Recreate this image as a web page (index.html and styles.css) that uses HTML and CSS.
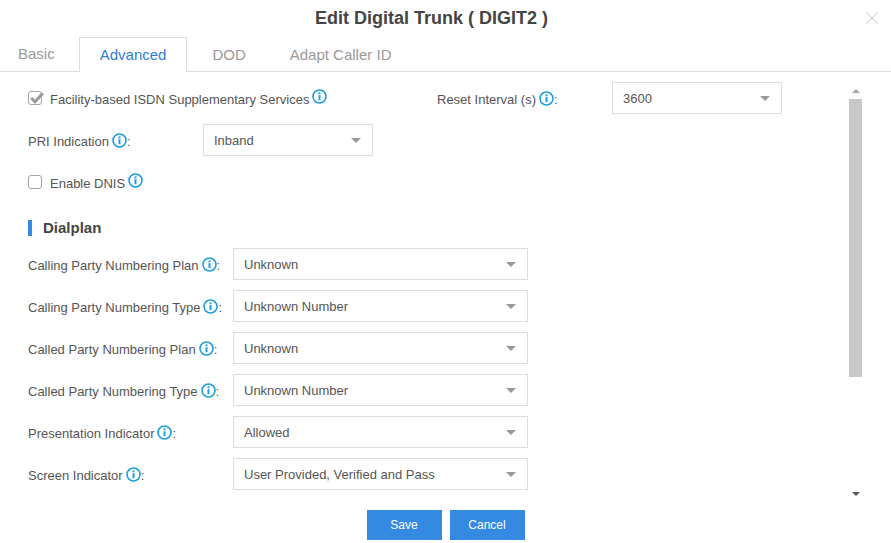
FILE: index.html
```html
<!DOCTYPE html>
<html lang="en">

<head>
  <meta charset="UTF-8">
  <title>Edit Digital Trunk</title>
  <link rel="stylesheet" href="styles.css">
</head>

<body>
  <svg class="sprite" width="0" height="0">
    <symbol id="info" viewBox="0 0 15 15">
      <circle cx="7.5" cy="7.5" r="6.5" fill="none" stroke="#1c9fe0" stroke-width="1.6" />
      <rect x="6.5" y="6.2" width="2" height="5" fill="#1c9fe0" />
      <rect x="6.5" y="3.4" width="2" height="1.9" fill="#1c9fe0" />
    </symbol>
  </svg>

  <div class="modal">
    <div class="modal-title">
      <h1>Edit Digital Trunk ( DIGIT2 )</h1>
      <svg class="close-icon" width="12" height="12" viewBox="0 0 12 12">
        <path d="M0.5 0.5L11.5 11.5M11.5 0.5L0.5 11.5" stroke="#c4c4c4" stroke-width="1" fill="none" />
      </svg>
    </div>

    <div class="tabs">
      <a class="tab tab-first">Basic</a>
      <a class="tab tab-active">Advanced</a>
      <a class="tab tab-dod">DOD</a>
      <a class="tab">Adapt Caller ID</a>
    </div>

    <div class="form-area">
      <!-- top settings -->
      <div class="row">
        <div class="check-col">
          <span class="checkbox">
            <svg width="16" height="16" viewBox="0 0 16 16">
              <path d="M3.2 7L7 10.8L14.8 2.2" stroke="#9a9a9a" stroke-width="3" fill="none" />
            </svg>
          </span>
          <span class="check-label">Facility-based ISDN Supplementary Services</span>
          <svg class="info"><use href="#info" /></svg>
        </div>
        <label class="label label-wide">Reset Interval (s)<svg class="info"><use href="#info" /></svg>:</label>
        <div class="select select-small"><span>3600</span><i class="caret"></i></div>
      </div>

      <div class="row">
        <label class="label label-wide">PRI Indication<svg class="info"><use href="#info" /></svg>:</label>
        <div class="select select-small"><span>Inband</span><i class="caret"></i></div>
      </div>

      <div class="row">
        <span class="checkbox"></span>
        <span class="check-label">Enable DNIS</span>
        <svg class="info"><use href="#info" /></svg>
      </div>

      <h2 class="section-title">Dialplan</h2>

      <div class="row">
        <label class="label label-plan">Calling Party Numbering Plan<svg class="info"><use href="#info" /></svg>:</label>
        <div class="select select-big"><span>Unknown</span><i class="caret"></i></div>
      </div>
      <div class="row">
        <label class="label label-plan">Calling Party Numbering Type<svg class="info"><use href="#info" /></svg>:</label>
        <div class="select select-big"><span>Unknown Number</span><i class="caret"></i></div>
      </div>
      <div class="row">
        <label class="label label-plan">Called Party Numbering Plan<svg class="info"><use href="#info" /></svg>:</label>
        <div class="select select-big"><span>Unknown</span><i class="caret"></i></div>
      </div>
      <div class="row">
        <label class="label label-plan">Called Party Numbering Type<svg class="info"><use href="#info" /></svg>:</label>
        <div class="select select-big"><span>Unknown Number</span><i class="caret"></i></div>
      </div>
      <div class="row">
        <label class="label label-plan">Presentation Indicator<svg class="info"><use href="#info" /></svg>:</label>
        <div class="select select-big"><span>Allowed</span><i class="caret"></i></div>
      </div>
      <div class="row">
        <label class="label label-plan">Screen Indicator<svg class="info"><use href="#info" /></svg>:</label>
        <div class="select select-big"><span>User Provided, Verified and Pass</span><i class="caret"></i></div>
      </div>

      <!-- scrollbar -->
      <i class="scroll-up"></i>
      <div class="scroll-thumb"></div>
      <i class="scroll-down"></i>
    </div>

    <div class="modal-footer">
      <button class="btn">Save</button>
      <button class="btn">Cancel</button>
    </div>
  </div>
</body>

</html>
```

FILE: styles.css
```css
* {
  margin: 0;
  padding: 0;
  box-sizing: border-box;
}

body {
  font-family: "Liberation Sans", Arial, sans-serif;
  font-size: 13px;
  color: #555;
  background-color: #fff;
  overflow: hidden;
}

.sprite {
  position: absolute;
}

.modal {
  width: 891px;
  height: 543px;
  background-color: #fff;
}

.modal-title {
  position: relative;
  height: 37px;
  padding-top: 8px;
  text-align: center;
}

.modal-title h1 {
  font-size: 18px;
  line-height: 20px;
  font-weight: bold;
  color: #444;
  padding-right: 28px;
}

.close-icon {
  position: absolute;
  top: 12px;
  left: 866px;
}

.tabs {
  display: flex;
  height: 35px;
  border-bottom: 1px solid #ddd;
}

.tab {
  height: 35px;
  padding: 0 21px;
  font-size: 15px;
  line-height: 34px;
  color: #999;
  border: 1px solid transparent;
  border-bottom: none;
}

.tab-first {
  padding-left: 18px;
  padding-right: 24px;
  border: none;
}

.tab-active {
  padding: 0 20px;
  color: #2e7fd6;
  background-color: #fff;
  border-color: #ddd;
}

.tab-dod {
  padding-left: 24px;
}

.form-area {
  position: relative;
  height: 438px;
  padding: 10px 0 0 28px;
}

.row {
  display: flex;
  align-items: center;
  height: 32px;
  margin-bottom: 10px;
}

.check-col {
  display: flex;
  align-items: center;
  width: 409px;
}

.checkbox {
  width: 14px;
  height: 14px;
  border: 1.5px solid #a3a3a3;
  border-radius: 3px;
  flex-shrink: 0;
  margin-right: 8px;
}

.checkbox svg {
  display: block;
  margin: -1px;
}

.check-label {
  padding-top: 2px;
}

.info {
  width: 15px;
  height: 15px;
  margin-left: 3px;
  margin-top: -4px;
  vertical-align: middle;
  flex-shrink: 0;
}

.label {
  flex-shrink: 0;
  padding-top: 2px;
  white-space: nowrap;
}

.label-wide {
  width: 175px;
}

.label-plan {
  width: 205px;
}

.select {
  display: flex;
  align-items: center;
  justify-content: space-between;
  height: 32px;
  padding: 0 11px 0 10px;
  border: 1px solid #ddd;
  background-color: #fff;
  color: #555;
}

.select-small {
  width: 170px;
}

.select-big {
  width: 295px;
}

.caret {
  width: 0;
  height: 0;
  border-left: 5px solid transparent;
  border-right: 5px solid transparent;
  border-top: 5px solid #999;
}

.section-title {
  height: 16px;
  margin-top: 22px;
  margin-bottom: 12px;
  padding-left: 11px;
  border-left: 4px solid #338ae0;
  font-size: 15px;
  line-height: 16px;
  font-weight: bold;
  color: #444;
}

.scroll-thumb {
  position: absolute;
  top: 27px;
  left: 849px;
  width: 13px;
  height: 278px;
  background-color: #c8c8c8;
}

.scroll-up {
  position: absolute;
  top: 17px;
  left: 852px;
  border-left: 4px solid transparent;
  border-right: 4px solid transparent;
  border-bottom: 4px solid #a8a8a8;
}

.scroll-down {
  position: absolute;
  top: 420px;
  left: 852px;
  border-left: 4px solid transparent;
  border-right: 4px solid transparent;
  border-top: 4px solid #555;
}

.modal-footer {
  display: flex;
  justify-content: center;
  gap: 8px;
}

.btn {
  width: 75px;
  height: 30px;
  font-family: inherit;
  font-size: 12px;
  color: #fff;
  background-color: #338ae0;
  border: none;
  cursor: pointer;
}
```
